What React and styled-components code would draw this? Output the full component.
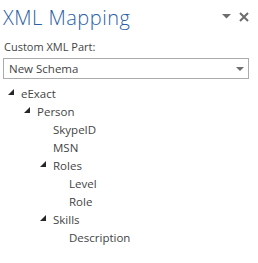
import styled, { createGlobalStyle } from "styled-components";

const GlobalStyle = createGlobalStyle`
  html, body {
    margin: 0;
    padding: 0;
    background: #ffffff;
  }
  body {
    font-family: "Open Sans", "Noto Sans", sans-serif;
    color: #444444;
  }
`;

const Pane = styled.div`
  width: 258px;
  height: 263px;
  box-sizing: border-box;
  padding: 2px 9px 0 3px;
  overflow: hidden;
`;

const Header = styled.div`
  display: flex;
  align-items: center;
  justify-content: space-between;
  height: 30px;
`;

const Title = styled.h1`
  margin: 0;
  font-size: 20px;
  font-weight: 300;
  color: #2b5fa6;
  letter-spacing: 0.5px;
`;

const Controls = styled.div`
  display: flex;
  align-items: center;
  gap: 8px;
  margin-top: -1px;
`;

const Label = styled.div`
  margin: 7px 0 0 1px;
  font-size: 11px;
  line-height: 15px;
  color: #444444;
`;

const Select = styled.div`
  margin-top: 4px;
  height: 21px;
  box-sizing: border-box;
  border: 1px solid #ababab;
  display: flex;
  align-items: center;
  justify-content: space-between;
  padding: 0 4px 0 5px;
  font-size: 11.5px;
  color: #444444;
`;

const Tree = styled.ul`
  list-style: none;
  margin: 5px 0 0;
  padding: 0;
`;

const Row = styled.li`
  display: flex;
  align-items: center;
  height: 18px;
  padding-left: ${(p) => 5 + p.$level * 16}px;
  font-size: 11.5px;
  color: #444444;
`;

const Toggle = styled.span`
  width: 13px;
  flex: none;
  display: flex;
  align-items: center;
  margin-top: -3px;
`;

const Expanded = () => (
  <svg width="6" height="6" viewBox="0 0 6 6">
    <polygon points="6,0 6,6 0,6" fill="#262626" />
  </svg>
);

const nodes = [
  { name: "eExact", level: 0, open: true },
  { name: "Person", level: 1, open: true },
  { name: "SkypeID", level: 2 },
  { name: "MSN", level: 2 },
  { name: "Roles", level: 2, open: true },
  { name: "Level", level: 3 },
  { name: "Role", level: 3 },
  { name: "Skills", level: 2, open: true },
  { name: "Description", level: 3 },
];

export default function App() {
  return (
    <>
      <GlobalStyle />
      <Pane>
        <Header>
          <Title>XML Mapping</Title>
          <Controls>
            <svg width="9" height="5" viewBox="0 0 9 5">
              <polygon points="0,0 9,0 4.5,4.5" fill="#6d6d6d" />
            </svg>
            <svg width="10" height="10" viewBox="0 0 10 10">
              <path d="M1 1 L9 9 M9 1 L1 9" stroke="#6d6d6d" strokeWidth="2" />
            </svg>
          </Controls>
        </Header>
        <Label>Custom XML Part:</Label>
        <Select>
          <span>New Schema</span>
          <svg width="8" height="4" viewBox="0 0 8 4">
            <polygon points="0,0 8,0 4,4" fill="#6d6d6d" />
          </svg>
        </Select>
        <Tree>
          {nodes.map((n) => (
            <Row key={n.name} $level={n.level}>
              <Toggle>{n.open && <Expanded />}</Toggle>
              {n.name}
            </Row>
          ))}
        </Tree>
      </Pane>
    </>
  );
}
